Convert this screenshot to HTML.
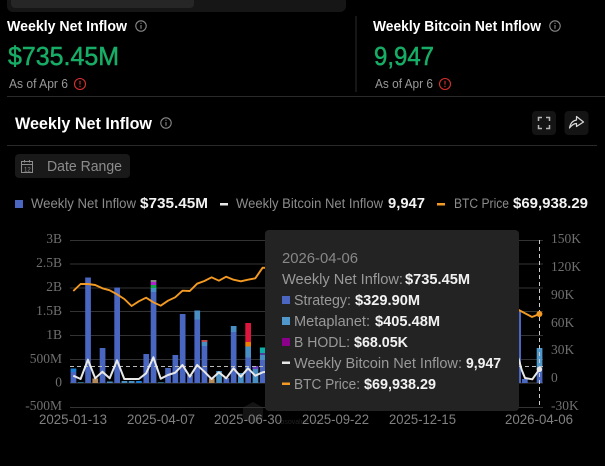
<!DOCTYPE html>
<html><head><meta charset="utf-8"><style>
html,body{margin:0;padding:0;background:#000;width:605px;height:466px;overflow:hidden}
svg{display:block}
text{font-family:"Liberation Sans",sans-serif}
.s{font-family:"Liberation Serif",serif;font-size:13.5px;fill:#6f6f6f}
.x{font-size:14px;fill:#808080}
.g{fill:#8c8c8c}
.w{fill:#f2f2f2;font-weight:bold}
</style></head><body>
<svg width="605" height="466" viewBox="0 0 605 466" xmlns="http://www.w3.org/2000/svg">
<defs><filter id="b" x="-2%" y="-2%" width="104%" height="104%"><feGaussianBlur stdDeviation="0.35"/></filter></defs>
<rect width="605" height="466" fill="#000"/>
<!-- top card -->
<path d="M7 0H346V6a6 6 0 0 1-6 6H13a6 6 0 0 1-6-6Z" fill="#161616"/>
<path d="M11 0H194V4a4 4 0 0 1-4 4H15a4 4 0 0 1-4-4Z" fill="#262626"/>
<!-- stats -->
<text x="7" y="31" font-size="14.5" font-weight="bold" fill="#fff" textLength="120" lengthAdjust="spacingAndGlyphs">Weekly Net Inflow</text>
<g fill="none" stroke="#888" stroke-width="1.1"><circle cx="141" cy="26" r="5.2"/><path d="M141 25v3.8M141 22.700v1.200"/></g>
<text x="8" y="65" font-size="26" fill="#17ad66" stroke="#17ad66" stroke-width="0.5" textLength="111" lengthAdjust="spacingAndGlyphs">$735.45M</text>
<text x="9" y="88" font-size="12.5" fill="#999" textLength="59" lengthAdjust="spacingAndGlyphs">As of Apr 6</text>
<g fill="none" stroke="#d9302c" stroke-width="1.1"><circle cx="80" cy="84" r="5.5"/><path d="M80 80.800v3.800M80 85.800v1.300"/></g>
<rect x="355.5" y="16" width="1" height="76" fill="#2c2c2c"/>
<text x="373" y="31" font-size="14.5" font-weight="bold" fill="#fff" textLength="168" lengthAdjust="spacingAndGlyphs">Weekly Bitcoin Net Inflow</text>
<g fill="none" stroke="#888" stroke-width="1.1"><circle cx="555" cy="26" r="5.2"/><path d="M555 25v3.800M555 22.700v1.200"/></g>
<text x="374" y="65" font-size="26" fill="#17ad66" stroke="#17ad66" stroke-width="0.5" textLength="60" lengthAdjust="spacingAndGlyphs">9,947</text>
<text x="375" y="88" font-size="12.5" fill="#999" textLength="58" lengthAdjust="spacingAndGlyphs">As of Apr 6</text>
<g fill="none" stroke="#d9302c" stroke-width="1.1"><circle cx="445" cy="84" r="5.5"/><path d="M445 80.800v3.800M445 85.800v1.300"/></g>
<rect x="7" y="96" width="598" height="1" fill="#2a2a2a"/>
<!-- header -->
<text x="15" y="129" font-size="16.5" font-weight="bold" fill="#fff" textLength="137" lengthAdjust="spacingAndGlyphs">Weekly Net Inflow</text>
<g fill="none" stroke="#888" stroke-width="1.1"><circle cx="166" cy="123" r="5.2"/><path d="M166 122v3.800M166 119.700v1.200"/></g>
<rect x="532" y="111" width="24" height="24" rx="4" fill="#141414"/>
<path d="M538.500 121v-3.500h3.500M549.500 121v-3.500h-3.500M538.500 125v3.500h3.500M549.500 125v3.500h-3.500" fill="none" stroke="#b4b4b4" stroke-width="1.500"/>
<rect x="564.500" y="111" width="24" height="24" rx="4" fill="#141414"/>
<path d="M569.500 128C570.500 123 573 120.500 576.500 120V116.500L583.500 122L576.500 126.500V123.500C573.500 123.500 571.500 125.500 569.500 128Z" fill="none" stroke="#d8d8d8" stroke-width="1.200" stroke-linejoin="round"/>
<rect x="7" y="145" width="590" height="1" fill="#2a2a2a"/>
<!-- date range -->
<rect x="15" y="154" width="115" height="24" rx="4" fill="#191919"/>
<g fill="none" stroke="#8c8c8c" stroke-width="1"><rect x="21.500" y="161.500" width="11" height="11"/><path d="M21.500 164.500h11M24.500 160v2.500M29.500 160v2.500"/></g>
<text x="24" y="171.500" font-size="6" fill="#8c8c8c">12</text>
<text x="47" y="171" font-size="15" fill="#8c8c8c" textLength="75" lengthAdjust="spacingAndGlyphs">Date Range</text>
<!-- legend -->
<rect x="15" y="200" width="8" height="8" fill="#4a66c0"/>
<text class="g" x="31" y="208" font-size="13.500" textLength="105" lengthAdjust="spacingAndGlyphs">Weekly Net Inflow</text>
<text class="w" x="140" y="208" font-size="14.500" textLength="68" lengthAdjust="spacingAndGlyphs">$735.45M</text>
<rect x="220" y="203" width="8" height="2.500" fill="#e8e8e8"/>
<text class="g" x="236" y="208" font-size="13.500" textLength="147" lengthAdjust="spacingAndGlyphs">Weekly Bitcoin Net Inflow</text>
<text class="w" x="388" y="208" font-size="14.500" textLength="37" lengthAdjust="spacingAndGlyphs">9,947</text>
<rect x="437" y="203" width="8" height="2.500" fill="#f39a24"/>
<text class="g" x="454" y="208" font-size="13.500" textLength="55" lengthAdjust="spacingAndGlyphs">BTC Price</text>
<text class="w" x="513" y="208" font-size="14.500" textLength="75" lengthAdjust="spacingAndGlyphs">$69,938.29</text>
<!-- watermark -->
<path d="M253 402l10 5.500v11l-10 5.500-10-5.500v-11Z" fill="#141414"/>
<text x="277" y="424" font-size="7" fill="#222">sosovalue.com</text>
<!-- grid -->
<g fill="#333"><rect x="70" y="240" width="473" height="1"/><rect x="70" y="263.500" width="473" height="1"/><rect x="70" y="287.500" width="473" height="1"/><rect x="70" y="311" width="473" height="1"/><rect x="70" y="335" width="473" height="1"/><rect x="70" y="359" width="473" height="1"/><rect x="70" y="382.500" width="473" height="1" fill="#444"/><rect x="70" y="407" width="473" height="1"/></g>
<!-- y labels -->
<text class="s" text-anchor="end" x="62" y="243">3B</text><text class="s" text-anchor="end" x="62" y="267">2.5B</text><text class="s" text-anchor="end" x="62" y="291">2B</text><text class="s" text-anchor="end" x="62" y="315">1.5B</text><text class="s" text-anchor="end" x="62" y="339">1B</text><text class="s" text-anchor="end" x="62" y="363">500M</text><text class="s" text-anchor="end" x="62" y="386.500">0</text><text class="s" text-anchor="end" x="62" y="410">-500M</text>
<text class="s" x="551" y="243">150K</text><text class="s" x="551" y="271">120K</text><text class="s" x="551" y="299">90K</text><text class="s" x="551" y="327">60K</text><text class="s" x="551" y="354">30K</text><text class="s" x="551" y="382">0</text><text class="s" x="551" y="410">-30K</text>
<!-- x labels -->
<text class="x" x="39" y="424" textLength="68" lengthAdjust="spacingAndGlyphs">2025-01-13</text>
<text class="x" x="127" y="424" textLength="68" lengthAdjust="spacingAndGlyphs">2025-04-07</text>
<text class="x" x="214" y="424" textLength="68" lengthAdjust="spacingAndGlyphs">2025-06-30</text>
<text class="x" x="302" y="424" textLength="67" lengthAdjust="spacingAndGlyphs">2025-09-22</text>
<text class="x" x="389" y="424" textLength="67" lengthAdjust="spacingAndGlyphs">2025-12-15</text>
<text class="x" x="505" y="424" textLength="68" lengthAdjust="spacingAndGlyphs">2026-04-06</text>
<!-- bars -->
<g filter="url(#b)">
<g fill="#4a66c0">
<rect x="70.600" y="372" width="5.700" height="11"/><rect x="70.600" y="368.500" width="5.700" height="3.500" fill="#1e7fd8"/>
<rect x="77.900" y="382" width="5.700" height="1" fill="#2a6a80"/>
<rect x="85.200" y="277.500" width="5.700" height="105.500"/>
<rect x="92.400" y="378.500" width="5.700" height="4.500" fill="#b58a5a"/>
<rect x="99.700" y="348" width="5.700" height="35"/>
<rect x="107" y="381.500" width="5.700" height="1.500" fill="#4a8fc4"/>
<rect x="114.300" y="287.500" width="5.700" height="95.500"/>
<rect x="121.600" y="381" width="5.700" height="2" fill="#4a8fc4"/>
<rect x="128.800" y="381" width="5.700" height="2" fill="#4a8fc4"/>
<rect x="136.100" y="381" width="5.700" height="2" fill="#1e7fd8"/>
<rect x="143.400" y="354" width="5.700" height="29"/>
<rect x="150.700" y="292" width="5.700" height="91"/><rect x="150.700" y="288" width="5.700" height="4" fill="#4a8fc4"/><rect x="150.700" y="285" width="5.700" height="3" fill="#0fa84a"/><rect x="150.700" y="282" width="5.700" height="3" fill="#b020d0"/><rect x="150.700" y="280" width="5.700" height="2" fill="#888"/>
<rect x="158" y="382" width="5.700" height="1" fill="#2a6a80"/>
<rect x="165.200" y="368" width="5.700" height="15"/>
<rect x="172.500" y="355" width="5.700" height="28"/>
<rect x="179.800" y="314" width="5.700" height="69"/>
<rect x="187.100" y="375" width="5.700" height="8"/>
<rect x="194.400" y="319" width="5.700" height="64"/><rect x="194.400" y="310.500" width="5.700" height="9" fill="#4a8fc4"/>
<rect x="201.600" y="346" width="5.700" height="37"/><rect x="201.600" y="340" width="5.700" height="6" fill="#4a8fc4"/><rect x="201.600" y="340" width="5.700" height="2" fill="#c04a4a"/>
<rect x="208.900" y="378.500" width="5.700" height="4.500" fill="#b58a5a"/>
<rect x="216.200" y="371" width="5.700" height="12" fill="#4a8fc4"/>
<rect x="223.500" y="378" width="5.700" height="5"/>
<rect x="230.800" y="332" width="5.700" height="51"/><rect x="230.800" y="326" width="5.700" height="6" fill="#4a8fc4"/>
<rect x="238" y="373" width="5.700" height="10" fill="#4a8fc4"/>
<rect x="245.300" y="357.500" width="5.700" height="25.500"/><rect x="245.300" y="346.500" width="5.700" height="11" fill="#4a8fc4"/><rect x="245.300" y="342" width="5.700" height="4.500" fill="#f07c00"/><rect x="245.300" y="323" width="5.700" height="19" fill="#dc143c"/>
<rect x="252.600" y="367" width="5.700" height="16" fill="#4a8fc4"/><rect x="252.600" y="366" width="5.700" height="3" fill="#6a40c0"/>
<rect x="259.900" y="360" width="5.700" height="23"/><rect x="259.900" y="355" width="5.700" height="5" fill="#4a8fc4"/><rect x="259.900" y="353" width="5.700" height="2" fill="#5040a0"/><rect x="259.900" y="347.500" width="5.700" height="5.500" fill="#10b0a8"/>
<rect x="516" y="310" width="5" height="73"/>
<rect x="522" y="379" width="5.700" height="4"/>
<rect x="536.700" y="367.500" width="5.700" height="15.500"/><rect x="536.700" y="348" width="5.700" height="19.500" fill="#5098cc"/>
</g>
<!-- dashed mark -->
<line x1="70" y1="366.500" x2="543" y2="366.500" stroke="#bbb" stroke-width="1" stroke-dasharray="4 3"/>
<line x1="539.500" y1="240" x2="539.500" y2="407" stroke="#ccc" stroke-width="1" stroke-dasharray="4 3"/>
<!-- lines -->
<polyline fill="none" stroke="#f39a24" stroke-width="1.900" stroke-linejoin="round" points="73.300,291 80.600,284 87.900,284 95.200,285 102.400,288.300 109.700,290.300 117,294.300 124.300,299 131.600,306 138.800,301.300 146.100,297.700 153.400,302.300 160.700,305.700 168,300.700 175.200,297.300 182.500,290.700 189.800,291 197.100,283.700 204.400,281 211.600,277.300 218.900,280.700 226.200,276.700 233.500,279.700 240.800,281.300 248,279.700 255.300,278.300 262.600,267.700 270,268"/>
<polyline fill="none" stroke="#e8e8e8" stroke-width="2" stroke-linejoin="round" points="73.300,375.700 80.600,379 87.900,359.700 95.200,378.300 102.400,371.700 109.700,378.300 117,360.300 124.300,379 131.600,379 138.800,379 146.100,373.300 153.400,357.300 160.700,378.700 168,375 175.200,372.700 182.500,365 189.800,376.700 197.100,365 204.400,371.700 211.600,379 218.900,372.300 226.200,378.300 233.500,368.300 240.800,376.700 248,368.300 255.300,375.700 262.600,372.300 270,371"/>
<polyline fill="none" stroke="#f39a24" stroke-width="1.900" points="515,308 532,317 539.400,314"/>
<polyline fill="none" stroke="#e8e8e8" stroke-width="2" stroke-linejoin="round" points="515,350 519,360 521.700,370 525,378 532.300,379.300 539.400,369.300"/>
<circle cx="539.400" cy="314" r="3" fill="#f39a24"/>
<circle cx="539.400" cy="369.300" r="2.700" fill="#e8e8e8"/>
</g>
<!-- tooltip -->
<rect x="265" y="230" width="254" height="181" rx="4" fill="#232323"/>
<text x="282" y="263" font-size="14.500" fill="#888" textLength="76" lengthAdjust="spacingAndGlyphs">2026-04-06</text>
<text x="282" y="284" font-size="14.500" fill="#999" textLength="121" lengthAdjust="spacingAndGlyphs">Weekly Net Inflow:</text>
<text class="w" x="405" y="284" font-size="15" textLength="65" lengthAdjust="spacingAndGlyphs">$735.45M</text>
<rect x="282" y="296" width="8" height="8" fill="#4a66c0"/>
<text x="294" y="305" font-size="14.500" fill="#999" textLength="57" lengthAdjust="spacingAndGlyphs">Strategy:</text>
<text class="w" x="355" y="305" font-size="15" textLength="65" lengthAdjust="spacingAndGlyphs">$329.90M</text>
<rect x="282" y="317" width="8" height="8" fill="#5098cc"/>
<text x="294" y="326" font-size="14.500" fill="#999" textLength="76" lengthAdjust="spacingAndGlyphs">Metaplanet:</text>
<text class="w" x="375" y="326" font-size="15" textLength="65" lengthAdjust="spacingAndGlyphs">$405.48M</text>
<rect x="282" y="338" width="8" height="8" fill="#8b008b"/>
<text x="294" y="347" font-size="14.500" fill="#999" textLength="56" lengthAdjust="spacingAndGlyphs">B HODL:</text>
<text class="w" x="354" y="347" font-size="15" textLength="54" lengthAdjust="spacingAndGlyphs">$68.05K</text>
<rect x="282" y="361.500" width="8" height="2.500" fill="#e8e8e8"/>
<text x="294" y="368" font-size="14.500" fill="#999" textLength="168" lengthAdjust="spacingAndGlyphs">Weekly Bitcoin Net Inflow:</text>
<text class="w" x="466" y="368" font-size="15" textLength="35" lengthAdjust="spacingAndGlyphs">9,947</text>
<rect x="282" y="382.500" width="8" height="2.500" fill="#f39a24"/>
<text x="294" y="389" font-size="14.500" fill="#999" textLength="66" lengthAdjust="spacingAndGlyphs">BTC Price:</text>
<text class="w" x="364" y="389" font-size="15" textLength="72" lengthAdjust="spacingAndGlyphs">$69,938.29</text>
</svg>
</body></html>
